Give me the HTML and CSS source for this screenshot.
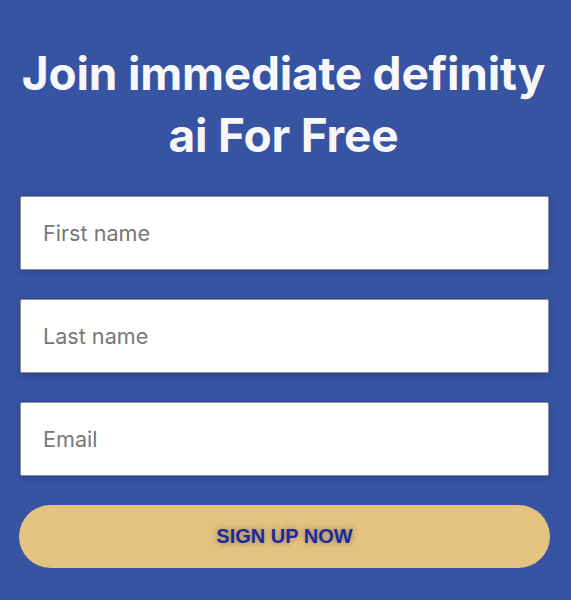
FILE: index.html
```html
<!DOCTYPE html>
<html>
<head>
<meta charset="utf-8">
<link rel="stylesheet" href="styles.css">
</head>
<body>
<div class="page">
  <h1 class="title">Join immediate definity ai For Free</h1>
  <form class="form">
    <input class="field" type="text" placeholder="First name">
    <input class="field" type="text" placeholder="Last name">
    <input class="field" type="email" placeholder="Email">
    <button class="submit" type="button">SIGN UP NOW</button>
  </form>
</div>
</body>
</html>
```
FILE: styles.css
```css
html, body {
  margin: 0;
  padding: 0;
  background: #3754a3;
}
.page {
  width: 571px;
  height: 600px;
  box-sizing: border-box;
  padding: 42px 20px 0 20px;
  font-family: Inter, "Noto Sans", sans-serif;
}
.title {
  margin: 0 -6px 0 -10px;
  color: #f7f7f9;
  font-size: 46px;
  line-height: 62px;
  font-weight: 700;
  text-align: center;
  letter-spacing: -0.2px;
}
.form {
  display: flex;
  flex-direction: column;
  gap: 29px;
  margin-top: 30px;
}
.field {
  width: 529px;
  height: 74px;
  box-sizing: border-box;
  border: 1px solid #8a8f9a;
  border-radius: 2px;
  background: #fff;
  padding: 0 22px;
  font-family: Inter, "Noto Sans", sans-serif;
  font-size: 21.6px;
  color: #333;
  box-shadow: 0 2px 6px rgba(20, 30, 80, 0.35);
  outline: none;
}
.field::placeholder {
  color: #787878;
}
.submit {
  margin-left: -1px;
  width: 531px;
  height: 63px;
  border: none;
  border-radius: 32px;
  background: #e4c27f;
  color: #1b2a9c;
  font-family: "Liberation Sans", Arial, sans-serif;
  font-weight: 700;
  font-size: 20px;
  text-shadow: 0 0 6px rgba(30, 30, 60, 0.45);
  cursor: pointer;
}
```
